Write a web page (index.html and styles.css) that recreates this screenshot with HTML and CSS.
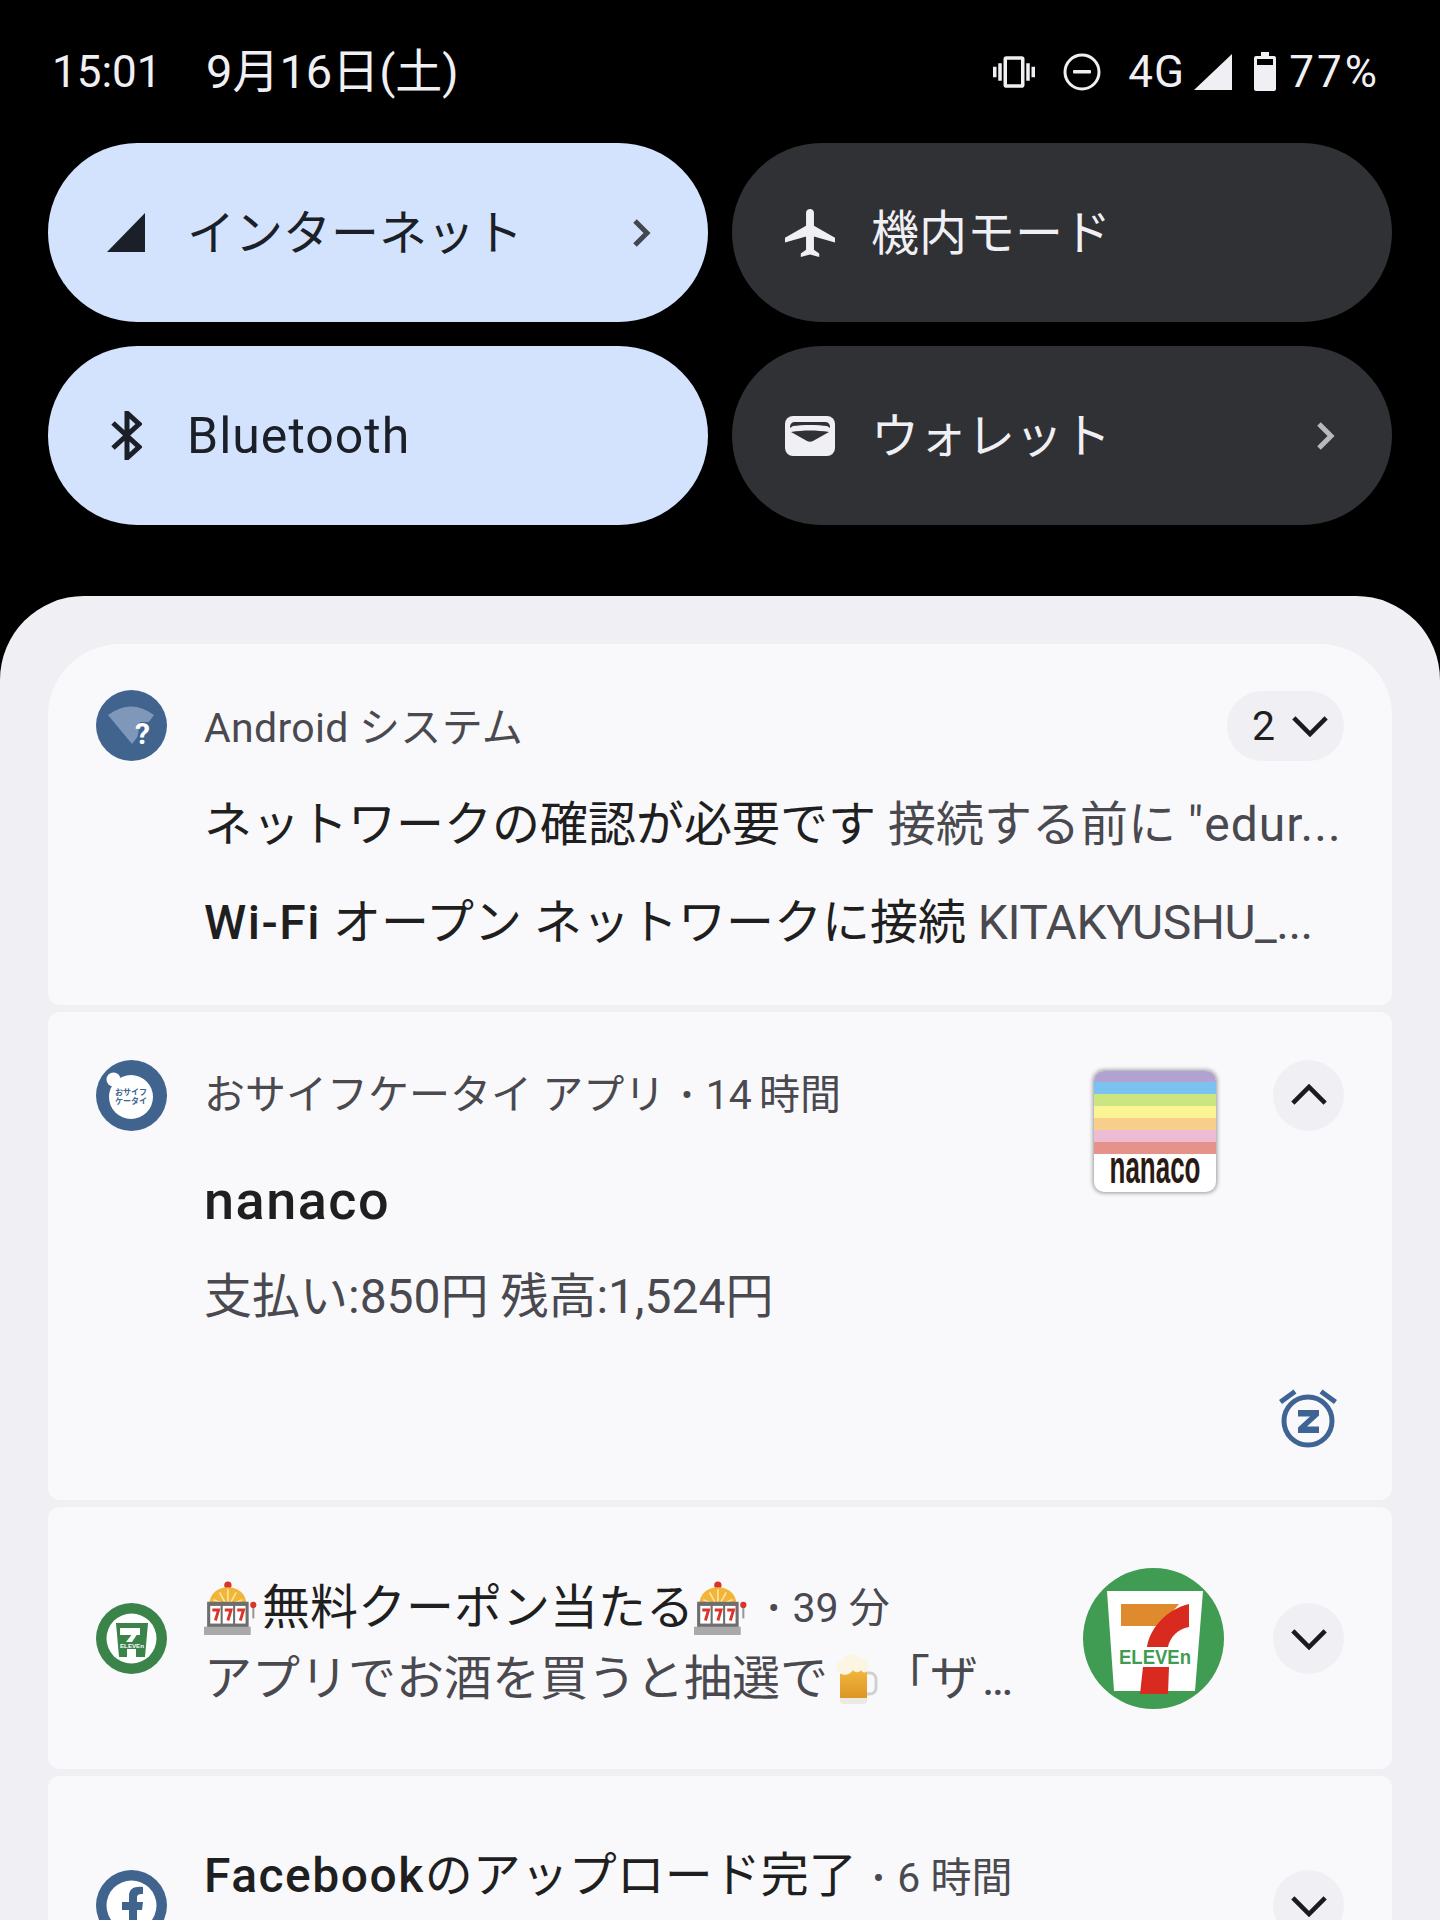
FILE: index.html
```html
<!DOCTYPE html>
<html lang="ja">
<head>
    <title>Quick settings</title>
    <meta charset="UTF-8">
    <meta name="viewport" content="width=device-width, initial-scale=1.0">
    <link rel="stylesheet" href="styles.css">
</head>
<body>
    <svg class="defs" width="0" height="0">
        <symbol id="slot" viewBox="0 0 52 52">
            <circle cx="23" cy="4" r="3.500" fill="#d8352c"/>
            <path d="M5 24C5 12 13 6 23 6s18 6 18 18z" fill="#f2b53a"/>
            <path d="M23 8v14M15 11l6 11M31 11l-6 11M9 18l12 5M37 18l-12 5" stroke="#f9e6a0" stroke-width="1.600"/>
            <rect x="3" y="20" width="40" height="25" fill="#6e6e6e"/>
            <rect x="6" y="24" width="10" height="17" fill="#fff"/>
            <rect x="18" y="24" width="10" height="17" fill="#fff"/>
            <rect x="30" y="24" width="10" height="17" fill="#fff"/>
            <path d="M8 28h6l-3 10M20 28h6l-3 10M32 28h6l-3 10" fill="none" stroke="#d8352c" stroke-width="2.800"/>
            <rect y="44" width="45" height="8" fill="#a9a9a9"/>
            <rect x="46.500" y="24" width="2" height="12" fill="#999"/>
            <circle cx="47.500" cy="23" r="3" fill="#d8352c"/>
        </symbol>
        <symbol id="chev-down" viewBox="0 0 40 24">
            <path d="M3 4l17 17L37 4" fill="none" stroke="currentColor" stroke-width="4.800"/>
        </symbol>
        <linearGradient id="beer-fill" x1="0" y1="0" x2="0" y2="1">
            <stop offset="0" stop-color="#f3b93f"/>
            <stop offset="1" stop-color="#d98f22"/>
        </linearGradient>
    </svg>

    <div class="status">
        <span class="clock">15:01</span>
        <span class="date">9月16日(土)</span>
        <div class="status-right">
            <svg class="ic-vibrate" viewBox="0 0 24 24"><path d="M0 15h2V9H0v6zm3 2h2V7H3v10zm19-8v6h2V9h-2zm-3 8h2V7h-2v10zM16.500 3h-9C6.670 3 6 3.670 6 4.500v15c0 .83.670 1.500 1.500 1.500h9c.83 0 1.500-.67 1.500-1.500v-15c0-.83-.67-1.500-1.500-1.500zM16 19H8V5h8v14z"/></svg>
            <svg class="ic-dnd" viewBox="0 0 38 38"><circle cx="19" cy="19" r="17" fill="none" stroke="currentColor" stroke-width="3"/><rect x="10" y="17" width="18" height="3.400" rx="1"/></svg>
            <span class="net">4G</span>
            <svg class="ic-signal" viewBox="0 0 38 36"><path d="M38 0v36H0z"/></svg>
            <svg class="ic-battery" viewBox="0 0 22 39"><path d="M7 0h8v4h5a2 2 0 0 1 2 2v31a2 2 0 0 1-2 2H2a2 2 0 0 1-2-2V6a2 2 0 0 1 2-2h5z"/><rect x="3" y="7" width="16" height="6" fill="#000"/></svg>
            <span class="pct">77%</span>
        </div>
    </div>

    <div class="tiles">
        <div class="tile on">
            <div class="tile-icon"><svg class="ic-cell" viewBox="0 0 38 39"><path d="M38 0v39H0z"/></svg></div>
            <span class="tile-label ja">インターネット</span>
            <svg class="tile-chev" viewBox="0 0 20 30"><path d="M3 3l12 12L3 27" fill="none" stroke="currentColor" stroke-width="5"/></svg>
        </div>
        <div class="tile">
            <div class="tile-icon"><svg class="ic-plane" viewBox="2 2 19 20" preserveAspectRatio="none"><path d="M21 16v-2l-8-5V3.500c0-.83-.67-1.500-1.500-1.500S10 2.670 10 3.500V9l-8 5v2l8-2.500V19l-2 1.500V22l3.500-1 3.500 1v-1.500L13 19v-5.500l8 2.500z"/></svg></div>
            <span class="tile-label ja">機内モード</span>
        </div>
        <div class="tile on">
            <div class="tile-icon"><svg class="ic-bt" viewBox="0 0 31 49"><path d="M2 12l26 24-12 11V2l12 11L2 37" fill="none" stroke="currentColor" stroke-width="5"/></svg></div>
            <span class="tile-label latin">Bluetooth</span>
        </div>
        <div class="tile">
            <div class="tile-icon"><svg class="ic-wallet" viewBox="0 0 50 40"><rect width="50" height="40" rx="8" fill="#f0f0f4"/><path d="M5 12c0-5 2-6 6-6h28c4 0 6 1 6 6l-3-2c-8-1.500-26-1.500-34 0z" fill="#303135"/><path d="M6 16c12-2 26-2 38 0l-16 9c-2 1-4 1-6 0z" fill="#303135"/></svg></div>
            <span class="tile-label ja">ウォレット</span>
            <svg class="tile-chev" viewBox="0 0 20 30"><path d="M3 3l12 12L3 27" fill="none" stroke="currentColor" stroke-width="5"/></svg>
        </div>
    </div>

    <div class="panel">
        <!-- system notifications group -->
        <div class="card card-first">
            <div class="notif-head">
                <div class="app-icon blue">
                    <svg viewBox="0 0 71 71">
                        <path d="M12 25Q35 8 58 25L36 54z" fill="#7f97b9"/>
                        <path d="M44 32h14v24H40z" fill="#41648f"/>
                    </svg>
                    <span class="ic-q">?</span>
                </div>
                <span class="app-name">Android システム</span>
                <div class="count"><span>2</span><svg class="chev" viewBox="0 0 40 24"><use href="#chev-down"/></svg></div>
            </div>
            <div class="group-line first-line"><span class="title">ネットワークの確認が必要です</span> <span class="sub">接続する前に <span class="wide">"edur...</span></span></div>
            <div class="group-line"><span class="title"><b class="med">Wi-Fi</b> オープン ネットワークに接続</span> <span class="sub tight">KITAKYUSHU_...</span></div>
        </div>

        <div class="card card-nanaco">
            <div class="notif-main">
                <div class="app-icon blue">
                    <svg viewBox="0 0 71 71">
                        <circle cx="17.500" cy="19.500" r="7" fill="#fff"/>
                        <circle cx="35" cy="37" r="22" fill="#fff"/>
                        <text x="35" y="35" class="osaifu-text">おサイフ</text>
                        <text x="35" y="44" class="osaifu-text">ケータイ</text>
                    </svg>
                </div>
                <div class="notif-text">
                    <div class="meta">おサイフケータイ アプリ<span class="dot">•</span><span class="ago">14 時間</span></div>
                    <div class="big-title">nanaco</div>
                    <div class="big-body">支払い:850円 残高:1,524円</div>
                </div>
                <div class="thumb-nanaco">
                    <div class="stripes"></div>
                    <svg class="nanaco-logo" viewBox="0 0 122 38"><text class="nanaco-word" transform="translate(61 29) scale(1 1.8)" textLength="91" lengthAdjust="spacing">nanaco</text></svg>
                </div>
                <div class="expand"><svg class="chev up" viewBox="0 0 40 24"><use href="#chev-down"/></svg></div>
            </div>
            <div class="snooze-row">
                <svg class="ic-snooze" viewBox="0 0 58 60">
                    <circle cx="29" cy="33" r="24" fill="none" stroke="#3f6494" stroke-width="5"/>
                    <path d="M1.500 14L16 3.500M56.500 14L42 3.500" stroke="#3f6494" stroke-width="5" fill="none"/>
                    <path d="M19 22h21v5.500L28 38.500h12V45H19v-5.500l12-11H19z" fill="#3f6494"/>
                </svg>
            </div>
        </div>

        <div class="card card-seven">
            <div class="app-icon green">
                <svg viewBox="0 0 71 71">
                    <circle cx="35.500" cy="35.500" r="25" fill="#fff"/>
                    <path d="M20 20h32l-3 34H23z" fill="#3b8449"/>
                    <path d="M24 25h20v7H24z" fill="#fff"/>
                    <path d="M44 27L36 39h-6l7-9z" fill="#fff"/>
                    <text x="36" y="44.500" class="seven-mini" textLength="24" lengthAdjust="spacingAndGlyphs">ELEVEn</text>
                    <rect x="31" y="46" width="9" height="8" fill="#fff"/>
                </svg>
            </div>
            <div class="seven-text">
                <div class="seven-title"><svg class="emoji"><use href="#slot"/></svg><span class="title">無料クーポン当たる</span><svg class="emoji"><use href="#slot"/></svg><span class="dot">•</span><span class="sub small">39 分</span></div>
                <div class="seven-body">アプリでお酒を買うと抽選で<svg class="beer" viewBox="0 0 42 51">
                    <path d="M30 20h4a6 6 0 0 1 6 6v9a6 6 0 0 1-6 6h-4" fill="none" stroke="#cfd0d6" stroke-width="3"/>
                    <path d="M4 15h27v31a4 4 0 0 1-4 4H8a4 4 0 0 1-4-4z" fill="url(#beer-fill)"/>
                    <path d="M4 45h27v2a4 4 0 0 1-4 4H8a4 4 0 0 1-4-4z" fill="#eceae2"/>
                    <path d="M5 21C-2 18-1 8 6 8c2-7 14-9 18-3 7-1 10 6 8 11-1 5-6 4-7 1-2 3-6 3-8 0-2 4-8 6-12 4z" fill="#fbf6e4"/>
                </svg>「ザ<span class="dots">...</span></div>
            </div>
            <div class="thumb-seven">
                <svg viewBox="0 0 141 141">
                    <circle cx="70.500" cy="70.500" r="70.500" fill="#3f9c52"/>
                    <path d="M24 23h96l-8 100H31z" fill="#fff"/>
                    <path d="M38 36h58l-10 12-10 10H38z" fill="#e08a2e"/>
                    <path d="M106 36v23c-11 2-19 10-21 20H64c3-18 18-37 42-43z" fill="#d92a20"/>
                    <path d="M60 99h26l-1 27H57z" fill="#d92a20"/>
                    <text x="72" y="96" class="seven-word" textLength="72" lengthAdjust="spacingAndGlyphs">ELEVEn</text>
                </svg>
            </div>
            <div class="expand"><svg class="chev" viewBox="0 0 40 24"><use href="#chev-down"/></svg></div>
        </div>

        <div class="card card-fb">
            <div class="app-icon blue">
                <svg viewBox="0 0 71 71">
                    <circle cx="35.500" cy="35.500" r="25" fill="#fff"/>
                    <path d="M33 61V40h-7v-8h7v-6c0-7 5-10 14-9v7c-5 0-6 1-6 4v4h6l-1 8h-5v21z" fill="#41648f"/>
                </svg>
            </div>
            <div class="fb-text"><span class="title"><b class="med">Facebook</b>のアップロード完了</span><span class="dot">•</span><span class="sub small">6 時間</span></div>
            <div class="expand"><svg class="chev" viewBox="0 0 40 24"><use href="#chev-down"/></svg></div>
        </div>
    </div>
</body>
</html>
```

FILE: styles.css
```css
html, body {
    margin: 0;
    height: 1920px;
    overflow: hidden;
}
body {
    background: #000;
    color: #1f1f1f;
    font-family: Roboto, "Noto Sans CJK JP", sans-serif;
}
.defs {
    position: absolute;
}
svg {
    display: block;
    fill: currentColor;
}

/* status bar */
.status {
    display: flex;
    align-items: center;
    height: 143px;
    padding: 0 60px 0 52px;
    box-sizing: border-box;
    color: #f0f0f4;
    font-size: 44px;
}
.clock {
    width: 154px;
}
.date {
    margin-top: -9px;
    font-size: 47px;
}
.status-right {
    display: flex;
    align-items: center;
    margin-left: auto;
}
.ic-vibrate {
    width: 42px;
    height: 42px;
}
.ic-dnd {
    width: 38px;
    height: 38px;
    margin-left: 28px;
}
.net {
    width: 66px;
    margin-left: 27px;
    font-size: 44px;
    letter-spacing: 1px;
}
.ic-signal {
    width: 38px;
    height: 36px;
}
.ic-battery {
    width: 22px;
    height: 39px;
    margin-left: 22px;
}
.pct {
    margin-left: 13px;
    letter-spacing: 3px;
}

/* quick settings */
.tiles {
    display: grid;
    grid-template-columns: 660px 660px;
    grid-auto-rows: 179px;
    gap: 24px;
    padding: 0 48px;
}
.tile {
    display: flex;
    align-items: center;
    padding: 0 48px 0 52px;
    border-radius: 90px;
    background: #303135;
    color: #f0f0f4;
}
.tile.on {
    background: #d3e3fd;
    color: #1b1f27;
}
.tile-icon {
    display: flex;
    justify-content: center;
    width: 52px;
    margin-right: 35px;
}
.tile-label {
    flex: 1;
    font-size: 48px;
}
.tile-label.ja {
    margin-top: -7px;
}
.tile-label.latin {
    font-size: 50px;
    letter-spacing: 1px;
}
.tile-chev {
    width: 20px;
    height: 30px;
    margin-right: 8px;
    color: #b9b9bd;
}
.tile.on .tile-chev {
    color: #44474e;
}
.ic-cell {
    width: 38px;
    height: 39px;
}
.ic-plane {
    width: 50px;
    height: 48px;
}
.ic-bt {
    width: 31px;
    height: 49px;
}
.ic-wallet {
    width: 50px;
    height: 40px;
}

/* notification shade */
.panel {
    display: flex;
    flex-direction: column;
    gap: 7px;
    height: 1324px;
    margin-top: 71px;
    padding: 48px 48px 0;
    box-sizing: border-box;
    border-radius: 84px 84px 0 0;
    background: #f0f0f4;
}
.card {
    flex: none;
    box-sizing: border-box;
    border-radius: 12px;
    background: #f9f9fc;
}
.card-first {
    height: 361px;
    padding: 46px 48px 0;
    border-radius: 72px 72px 12px 12px;
}
.card-nanaco {
    height: 488px;
    padding: 48px 48px 0;
}
.card-seven {
    display: flex;
    align-items: center;
    height: 262px;
    padding: 0 48px;
}
.card-fb {
    display: flex;
    align-items: flex-start;
    height: 200px;
    padding: 94px 48px 0;
}

.app-icon {
    position: relative;
    flex: none;
    width: 71px;
    height: 71px;
    overflow: hidden;
    border-radius: 50%;
}
.app-icon svg {
    width: 71px;
    height: 71px;
}
.blue {
    background: #41648f;
}
.green {
    background: #3b8449;
}
.ic-q {
    position: absolute;
    top: 27px;
    left: 39px;
    color: #fff;
    font-size: 30px;
    font-weight: 700;
    line-height: 34px;
}
.osaifu-text {
    fill: #41648f;
    font-size: 8px;
    font-weight: 700;
    text-anchor: middle;
}

.notif-head {
    display: flex;
    align-items: center;
}
.app-name {
    margin: -4px 0 0 37px;
    color: #49494f;
    font-size: 41px;
    letter-spacing: .3px;
}
.count {
    display: flex;
    align-items: center;
    gap: 16px;
    width: 117px;
    height: 70px;
    padding-left: 25px;
    box-sizing: border-box;
    margin-left: auto;
    border-radius: 35px;
    background: #f0f0f4;
    font-size: 41px;
}
.chev {
    width: 38px;
    height: 23px;
    color: #1b1b1f;
}
.chev.up {
    transform: scaleY(-1);
}
.expand {
    display: flex;
    flex: none;
    align-items: center;
    justify-content: center;
    width: 71px;
    height: 71px;
    border-radius: 50%;
    background: #f0f0f4;
}

.group-line {
    margin: 18px 0 0 108px;
    font-size: 48px;
    line-height: 80px;
    white-space: nowrap;
}
.first-line {
    margin-top: 24px;
}
.title {
    color: #1f1f1f;
}
.sub {
    color: #49494f;
}
.sub.small {
    font-size: 41px;
}
.sub.tight {
    letter-spacing: -.5px;
}
.wide {
    letter-spacing: 1px;
}
.med {
    font-weight: 500;
    letter-spacing: 1.500px;
}
.dot {
    margin: 0 13px 0 16px;
    color: #49494f;
    font-size: 34px;
    vertical-align: 2px;
}
.ago {
    word-spacing: -3px;
}

/* nanaco card */
.notif-main {
    display: flex;
    align-items: flex-start;
}
.notif-text {
    flex: 1;
    margin-left: 37px;
}
.meta {
    color: #49494f;
    font-size: 41px;
    line-height: 71px;
}
.big-title {
    margin-top: 40px;
    font-size: 54px;
    font-weight: 500;
    letter-spacing: 1.500px;
    line-height: 60px;
}
.big-body {
    margin-top: 36px;
    color: #49494f;
    font-size: 48px;
    line-height: 60px;
}
.thumb-nanaco {
    flex: none;
    width: 122px;
    height: 121px;
    margin: 11px 57px 0 0;
    border-radius: 10px;
    background: #fff;
    box-shadow: 0 0 4px 1px rgba(0, 0, 0, .4);
}
.stripes {
    height: 83px;
    border-radius: 10px 10px 0 0;
    background: linear-gradient(#b2a2d2 0 11px, #7cc2f0 11px 23px, #cbe580 23px 35px, #fbf494 35px 47px, #f7cf8a 47px 59px, #ecbbd4 59px 71px, #e5928a 71px);
}
.nanaco-logo {
    width: 122px;
    height: 38px;
    overflow: visible;
}
.nanaco-word {
    fill: #2a1a14;
    font-family: "Liberation Sans", sans-serif;
    font-size: 26px;
    font-weight: 700;
    text-anchor: middle;
}
.snooze-row {
    display: flex;
    justify-content: flex-end;
    margin: 61px 7px 0 0;
}
.ic-snooze {
    width: 58px;
    height: 60px;
}

/* seven eleven card */
.seven-text {
    flex: 1;
    min-width: 0;
    margin-left: 37px;
    padding-top: 9px;
}
.seven-title {
    display: flex;
    align-items: center;
    font-size: 48px;
    line-height: 72px;
    white-space: nowrap;
}
.seven-body {
    display: flex;
    align-items: center;
    color: #49494f;
    font-size: 48px;
    line-height: 70px;
    white-space: nowrap;
}
.emoji {
    flex: none;
    width: 54px;
    height: 54px;
    margin-right: 4px;
}
.beer {
    flex: none;
    width: 42px;
    height: 51px;
    margin: 0 4px 0 8px;
}
.dots {
    margin-left: 4px;
    letter-spacing: -3px;
}
.thumb-seven {
    flex: none;
    width: 141px;
    height: 141px;
    margin-right: 49px;
}
.seven-word {
    fill: #3f9c52;
    font-family: "Liberation Sans", sans-serif;
    font-size: 20px;
    font-weight: 700;
    text-anchor: middle;
}
.seven-mini {
    fill: #fff;
    font-family: "Liberation Sans", sans-serif;
    font-size: 6px;
    font-weight: 700;
    text-anchor: middle;
}

/* facebook card */
.fb-text {
    flex: 1;
    margin: -30px 0 0 37px;
    font-size: 48px;
    line-height: 72px;
    white-space: nowrap;
}
```
